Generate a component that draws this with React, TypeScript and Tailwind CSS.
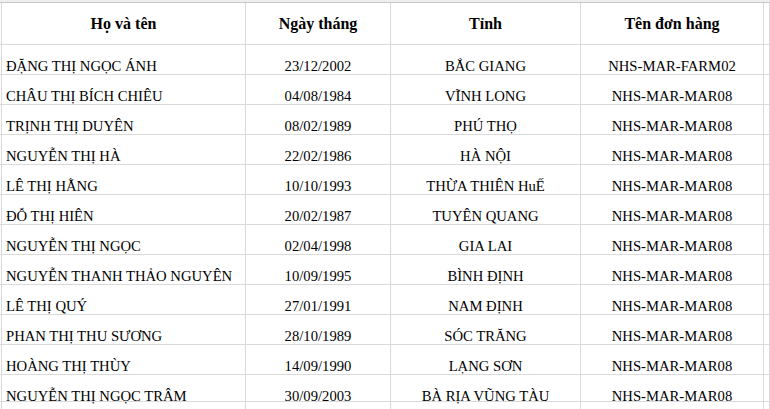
import React from "react";

const rows: [string, string, string, string][] = [
  ["ĐẶNG THỊ NGỌC ÁNH", "23/12/2002", "BẮC GIANG", "NHS-MAR-FARM02"],
  ["CHÂU THỊ BÍCH CHIÊU", "04/08/1984", "VĨNH LONG", "NHS-MAR-MAR08"],
  ["TRỊNH THỊ DUYÊN", "08/02/1989", "PHÚ THỌ", "NHS-MAR-MAR08"],
  ["NGUYỄN THỊ HÀ", "22/02/1986", "HÀ NỘI", "NHS-MAR-MAR08"],
  ["LÊ THỊ HẰNG", "10/10/1993", "THỪA THIÊN HuẾ", "NHS-MAR-MAR08"],
  ["ĐỖ THỊ HIÊN", "20/02/1987", "TUYÊN QUANG", "NHS-MAR-MAR08"],
  ["NGUYỄN THỊ NGỌC", "02/04/1998", "GIA LAI", "NHS-MAR-MAR08"],
  ["NGUYỄN THANH THẢO NGUYÊN", "10/09/1995", "BÌNH ĐỊNH", "NHS-MAR-MAR08"],
  ["LÊ THỊ QUÝ", "27/01/1991", "NAM ĐỊNH", "NHS-MAR-MAR08"],
  ["PHAN THỊ THU SƯƠNG", "28/10/1989", "SÓC TRĂNG", "NHS-MAR-MAR08"],
  ["HOÀNG THỊ THÙY", "14/09/1990", "LẠNG SƠN", "NHS-MAR-MAR08"],
  ["NGUYỄN THỊ NGỌC TRÂM", "30/09/2003", "BÀ RỊA VŨNG TÀU", "NHS-MAR-MAR08"],
];

const grid = "grid grid-cols-[2px_244px_145px_190px_183px_1fr]";
const cell = "border-r border-b border-[#dadada] whitespace-nowrap";
const head = "h-[42px] flex items-center justify-center font-bold text-[16px]";

export default function App() {
  return (
    <div className="w-[770px] h-[409px] overflow-hidden bg-white text-black text-[14.67px] leading-[18px] font-['Liberation_Serif','Times_New_Roman',serif]">
      <div className="h-[2px] bg-[#eeeeee]" />
      <div className="h-[1px] bg-[#c8c8c8]" />
      <div className={grid}>
        <div className={`${cell} h-[42px]`} />
        <div className={`${cell} ${head}`}>Họ và tên</div>
        <div className={`${cell} ${head}`}>Ngày tháng</div>
        <div className={`${cell} ${head}`}>Tỉnh</div>
        <div className={`${cell} ${head}`}>Tên đơn hàng</div>
        <div className={`${cell} h-[42px]`} />
      </div>
      {rows.map((r, i) => {
        const h = i === rows.length - 1 ? "h-[27px]" : "h-[30px]";
        return (
          <div key={i} className={grid}>
            <div className={`${cell} ${h}`} />
            <div className={`${cell} ${h} pt-[12px] pl-[4px]`}>{r[0]}</div>
            <div className={`${cell} ${h} pt-[12px] text-center`}>{r[1]}</div>
            <div className={`${cell} ${h} pt-[12px] text-center`}>{r[2]}</div>
            <div className={`${cell} ${h} pt-[12px] text-center`}>{r[3]}</div>
            <div className={`${cell} ${h}`} />
          </div>
        );
      })}
      <div className={grid}>
        <div className={`${cell} h-[30px]`} />
        <div className={`${cell} h-[30px]`} />
        <div className={`${cell} h-[30px]`} />
        <div className={`${cell} h-[30px]`} />
        <div className={`${cell} h-[30px]`} />
        <div className={`${cell} h-[30px]`} />
      </div>
    </div>
  );
}
